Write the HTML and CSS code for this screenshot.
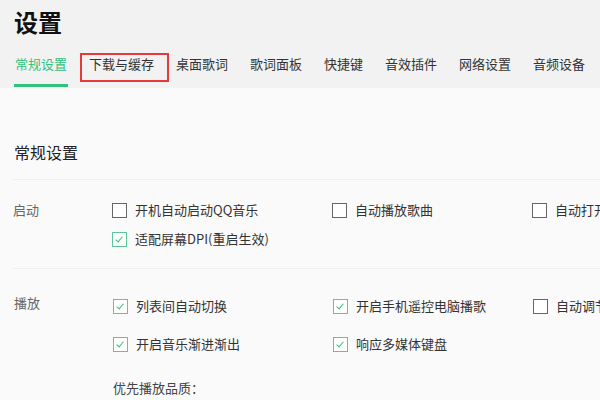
FILE: index.html
```html
<!DOCTYPE html>
<html lang="zh-CN">
<head>
    <meta charset="UTF-8">
    <title>设置</title>
    <link rel="stylesheet" href="styles.css">
</head>
<body>
<header class="top">
    <h1>设置</h1>
    <nav class="tabs">
        <a class="tab active">常规设置</a>
        <a class="tab marked">下载与缓存</a>
        <a class="tab">桌面歌词</a>
        <a class="tab">歌词面板</a>
        <a class="tab">快捷键</a>
        <a class="tab">音效插件</a>
        <a class="tab">网络设置</a>
        <a class="tab">音频设备</a>
    </nav>
</header>

<main class="content">
    <h2>常规设置</h2>

    <section class="group group-start">
        <div class="group-label">启动</div>
        <div class="options">
            <label class="opt"><span class="box"></span>开机自动启动QQ音乐</label>
            <label class="opt"><span class="box"></span>自动播放歌曲</label>
            <label class="opt"><span class="box"></span>自动打开歌词</label>
            <label class="opt"><span class="box on"></span>适配屏幕DPI(重启生效)</label>
        </div>
    </section>

    <section class="group group-play">
        <div class="group-label">播放</div>
        <div>
            <div class="options">
                <label class="opt"><span class="box on"></span>列表间自动切换</label>
                <label class="opt"><span class="box on"></span>开启手机遥控电脑播歌</label>
                <label class="opt"><span class="box"></span>自动调节音量</label>
                <label class="opt"><span class="box on"></span>开启音乐渐进渐出</label>
                <label class="opt"><span class="box on"></span>响应多媒体键盘</label>
            </div>
            <div class="sub-title">优先播放品质：</div>
        </div>
    </section>
</main>
</body>
</html>
```

FILE: styles.css
```css
body {
    margin: 0;
    font-family: "Noto Sans CJK SC", "Liberation Sans", sans-serif;
    background-color: #fafafa;
    color: #333;
    overflow: hidden;
}
.top {
    background-color: #f2f2f2;
    padding: 6px 0 1px 14px;
}
h1 {
    margin: 0;
    font-size: 24px;
    line-height: 32px;
    font-weight: bold;
    color: #111;
}
.tabs {
    display: flex;
    gap: 20px;
    margin-top: 16px;
    white-space: nowrap;
}
.tab {
    position: relative;
    display: block;
    padding: 0 1px 10px;
    font-size: 13px;
    line-height: 20px;
    color: #333;
    border-bottom: 3px solid transparent;
}
.tab.active {
    color: #31c27c;
    border-bottom-color: #31c27c;
}
.tab.marked::after {
    content: "";
    position: absolute;
    top: -1px;
    left: -8px;
    right: -14px;
    height: 25px;
    border: 2px solid #e63a3a;
}
.content {
    padding: 0 0 0 14px;
}
h2 {
    margin: 53px 0 16px;
    font-size: 16px;
    line-height: 22px;
    font-weight: normal;
    color: #222;
}
.group {
    display: flex;
    border-top: 1px solid #efefef;
    margin-left: -1px;
    padding-left: 1px;
}
.group-label {
    width: 99px;
    flex: none;
    font-size: 13px;
    line-height: 20px;
    color: #666;
}
.options {
    display: grid;
    grid-template-columns: 220px 200px 120px;
    font-size: 13px;
    line-height: 20px;
    white-space: nowrap;
}
.group-start {
    padding: 20px 0 19px;
}
.group-start .options {
    row-gap: 9px;
}
.group-play {
    padding-top: 25px;
}
.group-play .group-label {
    margin-top: -1px;
}
.group-play .options {
    row-gap: 18px;
    margin-top: 2px;
}
.opt {
    display: flex;
    align-items: center;
    gap: 8px;
}
.box {
    width: 13px;
    height: 13px;
    flex: none;
    border: 1px solid #666;
    background: #fff;
    position: relative;
}
.box.on {
    border-color: #5cc89a;
}
.box.on::after {
    content: "";
    position: absolute;
    left: 4px;
    top: 2px;
    width: 3px;
    height: 6px;
    border: solid #31c27c;
    border-width: 0 1.5px 1.5px 0;
    transform: rotate(40deg);
}
.sub-title {
    margin-top: 24px;
    font-size: 13px;
    line-height: 20px;
    color: #444;
}
```
